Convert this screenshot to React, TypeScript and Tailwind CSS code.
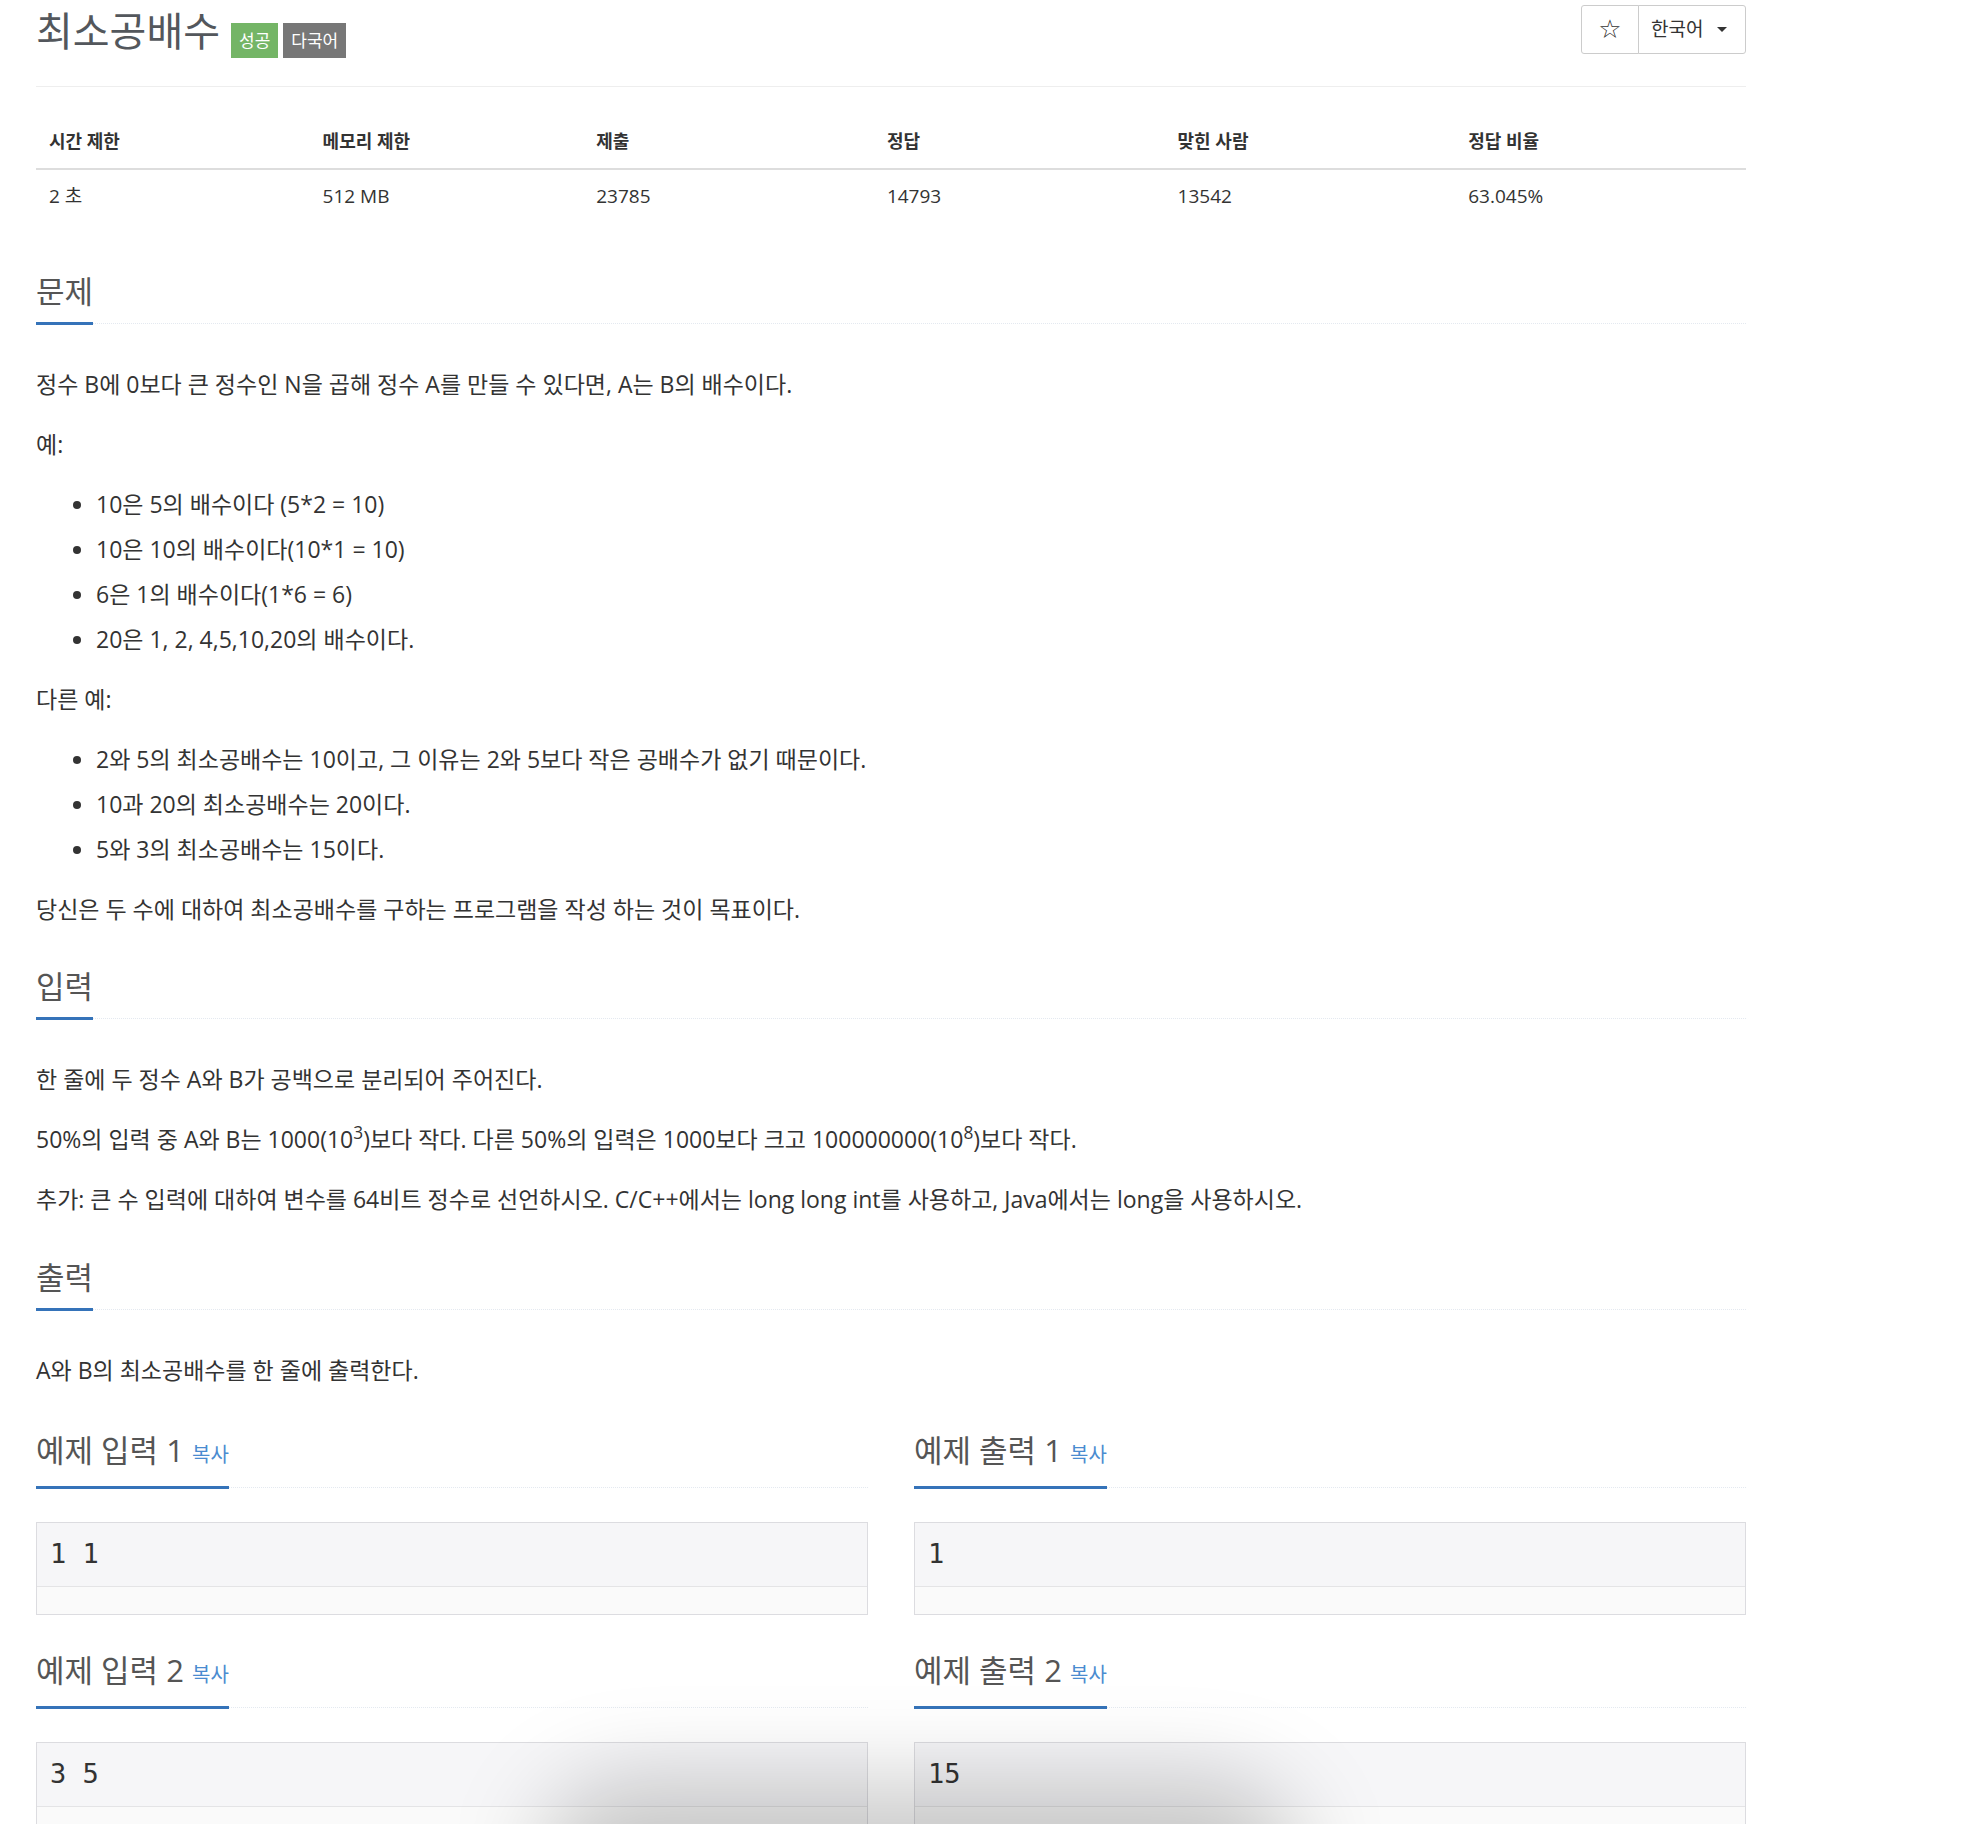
import type { ReactNode } from "react";

const stats = [
  { label: "시간 제한", value: "2 초", w: "w-[16%]" },
  { label: "메모리 제한", value: "512 MB", w: "w-[16%]" },
  { label: "제출", value: "23785", w: "w-[17%]" },
  { label: "정답", value: "14793", w: "w-[17%]" },
  { label: "맞힌 사람", value: "13542", w: "w-[17%]" },
  { label: "정답 비율", value: "63.045%", w: "w-[17%]" },
];

function Headline({ children, className = "" }: { children: ReactNode; className?: string }) {
  return (
    <div className={`flex border-b border-dotted border-[#e4e9f0] ${className}`}>
      <h2 className="-mb-[2px] border-b-[3px] border-[#3573b9] pb-[11px] text-[31px] font-normal leading-[40px] text-[#555]">
        {children}
      </h2>
    </div>
  );
}

function SampleTitle({ children }: { children: ReactNode }) {
  return (
    <Headline className="mb-[34px]">
      {children} <a className="text-[20px] text-[#4a8bd0]">복사</a>
    </Headline>
  );
}

function SampleBox({ text }: { text: string }) {
  return (
    <div className="border border-[#dcdce0] bg-[#f6f6f8]">
      <div className="flex h-[63px] items-center whitespace-pre px-[13px] font-['DejaVu_Sans_Mono',monospace] text-[27px] text-[#333]">
        {text}
      </div>
      <div className="h-[28px] border-t border-[#e4e4e6] bg-[#fafafa]" />
    </div>
  );
}

function P({ children }: { children: ReactNode }) {
  return <p className="mb-[15px] text-[23px] leading-[45px] text-[#333]">{children}</p>;
}

function List({ items }: { items: string[] }) {
  return (
    <ul className="mb-[15px] list-disc pl-[60px] text-[23px] leading-[45px] text-[#333]">
      {items.map((t) => (
        <li key={t}>{t}</li>
      ))}
    </ul>
  );
}

export default function App() {
  return (
    <div className="relative h-[1824px] overflow-hidden bg-white font-['Open_Sans','Noto_Sans_CJK_KR',sans-serif]">
      <div className="ml-[36px] flex w-[1710px] flex-col">
        <div className="flex h-[87px] items-start justify-between border-b border-[#eee]">
          <div className="flex items-start">
            <h1 className="mt-[8px] text-[40px] font-normal leading-[46px] text-[#53575c]">최소공배수</h1>
            <span className="ml-[11px] mt-[23px] flex h-[35px] items-center bg-[#74b566] px-[8px] text-[17px] text-white">
              성공
            </span>
            <span className="ml-[5px] mt-[23px] flex h-[35px] items-center bg-[#777] px-[8px] text-[17px] text-white">
              다국어
            </span>
          </div>
          <div className="mt-[5px] flex h-[49px]">
            <button className="flex w-[58px] items-center justify-center rounded-l-[3px] border border-[#ccc] bg-white font-['DejaVu_Sans',sans-serif] text-[26px] text-[#333]">
              ☆
            </button>
            <button className="-ml-px flex w-[108px] items-center rounded-r-[3px] border border-[#ccc] bg-white pl-[12px] text-[19px] text-[#333]">
              한국어
              <span className="ml-[14px] inline-block border-x-[5px] border-t-[5px] border-x-transparent border-t-[#333]" />
            </button>
          </div>
        </div>

        <table className="mt-[28px] w-full border-collapse text-[#333]">
          <thead>
            <tr>
              {stats.map((s) => (
                <th
                  key={s.label}
                  className={`${s.w} h-[54px] border-b-2 border-[#ddd] pl-[13px] text-left text-[18px] font-bold`}
                >
                  {s.label}
                </th>
              ))}
            </tr>
          </thead>
          <tbody>
            <tr>
              {stats.map((s) => (
                <td key={s.label} className="h-[54px] pl-[13px] text-[19px]">
                  {s.value}
                </td>
              ))}
            </tr>
          </tbody>
        </table>

        <section className="mt-[48px] flex flex-col">
          <Headline className="mb-[38px]">문제</Headline>
          <P>정수 B에 0보다 큰 정수인 N을 곱해 정수 A를 만들 수 있다면, A는 B의 배수이다.</P>
          <P>예:</P>
          <List
            items={[
              "10은 5의 배수이다 (5*2 = 10)",
              "10은 10의 배수이다(10*1 = 10)",
              "6은 1의 배수이다(1*6 = 6)",
              "20은 1, 2, 4,5,10,20의 배수이다.",
            ]}
          />
          <P>다른 예:</P>
          <List
            items={[
              "2와 5의 최소공배수는 10이고, 그 이유는 2와 5보다 작은 공배수가 없기 때문이다.",
              "10과 20의 최소공배수는 20이다.",
              "5와 3의 최소공배수는 15이다.",
            ]}
          />
          <P>당신은 두 수에 대하여 최소공배수를 구하는 프로그램을 작성 하는 것이 목표이다.</P>
        </section>

        <section className="mt-[19px] flex flex-col">
          <Headline className="mb-[38px]">입력</Headline>
          <P>한 줄에 두 정수 A와 B가 공백으로 분리되어 주어진다.</P>
          <P>
            50%의 입력 중 A와 B는 1000(10<sup>3</sup>)보다 작다. 다른 50%의 입력은 1000보다 크고 100000000(10
            <sup>8</sup>)보다 작다.
          </P>
          <P>
            추가: 큰 수 입력에 대하여 변수를 64비트 정수로 선언하시오. C/C++에서는 long long int를 사용하고, Java에서는
            long을 사용하시오.
          </P>
        </section>

        <section className="mt-[20px] flex flex-col">
          <Headline className="mb-[38px]">출력</Headline>
          <P>A와 B의 최소공배수를 한 줄에 출력한다.</P>
        </section>

        <div className="mt-[22px] grid grid-cols-2 gap-x-[46px] gap-y-[35px]">
          <div>
            <SampleTitle>예제 입력 1</SampleTitle>
            <SampleBox text="1 1" />
          </div>
          <div>
            <SampleTitle>예제 출력 1</SampleTitle>
            <SampleBox text="1" />
          </div>
          <div>
            <SampleTitle>예제 입력 2</SampleTitle>
            <SampleBox text="3 5" />
          </div>
          <div>
            <SampleTitle>예제 출력 2</SampleTitle>
            <SampleBox text="15" />
          </div>
        </div>
      </div>

      <div className="pointer-events-none absolute left-[540px] top-[1780px] h-[180px] w-[760px] rounded-full bg-black/20 blur-[45px]" />
    </div>
  );
}
